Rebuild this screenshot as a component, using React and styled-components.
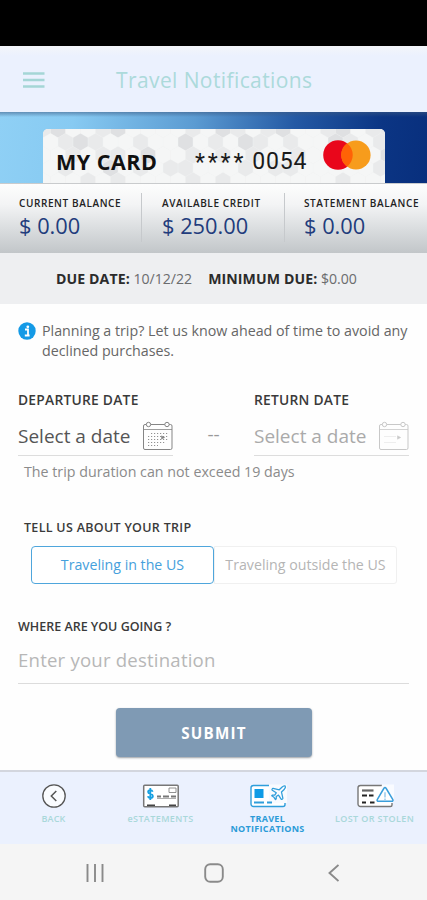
import React from 'react';
import styled, { createGlobalStyle } from 'styled-components';
import { Plane } from 'lucide-react';

const GlobalStyle = createGlobalStyle`
  * {
    box-sizing: border-box;
  }
  body {
    margin: 0;
    background: #fefefe;
    font-family: 'Open Sans', 'Liberation Sans', sans-serif;
  }
`;

const Screen = styled.div`
  width: 427px;
  height: 900px;
  display: flex;
  flex-direction: column;
  overflow: hidden;
  background: #fefefe;
`;

const StatusBar = styled.div`
  height: 46px;
  background: #000;
`;

const Header = styled.header`
  height: 66px;
  padding: 2px 23px 0;
  display: flex;
  align-items: center;
  background: linear-gradient(#f3f5f9, #ebf1fe 10px);
`;

const MenuIcon = styled.svg`
  width: 22px;
  height: 16px;
  stroke: #a5d6d6;
  stroke-width: 2.4;
`;

const Title = styled.h1`
  margin: 0 0 0 71px;
  font-size: 21px;
  font-weight: 400;
  letter-spacing: 0.4px;
  line-height: 28px;
  color: #acdadb;
  white-space: nowrap;
`;

const Hero = styled.section`
  height: 71px;
  padding: 17px 42px 0 43px;
  background:
    linear-gradient(rgba(60, 90, 130, 0.55), rgba(60, 90, 130, 0) 5px),
    linear-gradient(97deg, #8fd0f5 0%, #87caf2 17%, #5b9bd2 45%, #2459a4 68%, #0b3584 88%, #082f7d 100%);
`;

const CardFace = styled.div`
  display: grid;
  height: 54px;
  border-radius: 5px 5px 0 0;
  overflow: hidden;
  background: #f1f2f2;

  > * {
    grid-area: 1 / 1;
  }
`;

const CardRow = styled.div`
  z-index: 1;
  height: 54px;
  padding-left: 13px;
  display: flex;
  align-items: center;
`;

const CardName = styled.div`
  width: 139px;
  padding-top: 12px;
  font-size: 21.5px;
  font-weight: 700;
  letter-spacing: 0.5px;
  line-height: 30px;
  color: #111;
  white-space: nowrap;
`;

const CardNumber = styled.div`
  width: 128px;
  padding-top: 12px;
  display: flex;
  gap: 6px;
  font-family: Roboto, sans-serif;
  font-size: 23px;
  letter-spacing: 0.8px;
  line-height: 30px;
  color: #1b1b1b;
  white-space: nowrap;
`;

const Mask = styled.span`
  padding-top: 1px;
  letter-spacing: 2.9px;
`;

const LogoWrap = styled.div`
  height: 30px;
  margin-bottom: 3px;
  display: flex;
`;

const Balances = styled.section`
  height: 70px;
  padding: 9px 0 0;
  display: flex;
  border-top: 1px solid #c9cbcd;
  background: linear-gradient(#fdfdfd 0%, #f3f4f5 30%, #dadddf 65%, #c2c6c9 100%);
`;

const Balance = styled.div`
  width: ${(props) => props.$width}px;
  height: 49px;
  padding-left: ${(props) => props.$pad}px;
  border-left: ${(props) => (props.$divider ? '1px solid #c6c9cc' : 'none')};
  white-space: nowrap;
`;

const BalanceLabel = styled.div`
  padding-top: 2px;
  font-size: 10px;
  font-weight: 600;
  letter-spacing: 0.6px;
  line-height: 16px;
  color: #222;
`;

const BalanceValue = styled.div`
  font-size: 21.8px;
  line-height: 29px;
  color: #223c7c;
`;

const DueBar = styled.div`
  height: 51px;
  padding: 0 0 0 56px;
  display: flex;
  align-items: center;
  gap: 16px;
  font-size: 14.1px;
  color: #6b6c6e;
  background: #eeeff1;
  white-space: nowrap;

  b {
    font-weight: 700;
    letter-spacing: 0.1px;
    color: #2b2b2b;
  }
`;

const Form = styled.main`
  flex: 1;
  padding: 17px 18px 0;
`;

const Info = styled.div`
  display: flex;
  gap: 6px;
  height: 71px;
  font-size: 14.25px;
  line-height: 19.5px;
  color: #666;
  white-space: nowrap;

  svg {
    flex: none;
  }
`;

const Dates = styled.div`
  display: flex;
  justify-content: space-between;
`;

const DateField = styled.div`
  width: 155px;
`;

const Label = styled.div`
  height: 16px;
  padding-left: ${(props) => props.$indent || 0}px;
  font-size: ${(props) => props.$size}px;
  font-weight: 600;
  letter-spacing: ${(props) => props.$spacing || 0}px;
  line-height: 16px;
  color: #3a3a3a;
  white-space: nowrap;
`;

const DateInput = styled.div`
  height: 48px;
  padding-top: 8px;
  display: flex;
  justify-content: space-between;
  align-items: center;
  border-bottom: 1px solid #ddd;
  font-size: 19px;
  line-height: 24px;
  color: ${(props) => (props.$disabled ? '#aaa' : '#555')};
  white-space: nowrap;
`;

const Dash = styled.div`
  padding-top: 30px;
  font-size: 19px;
  line-height: 24px;
  color: #999;
`;

const Hint = styled.div`
  height: 64px;
  padding: 6px 0 0 6px;
  font-size: 14.25px;
  line-height: 20px;
  color: #8b8b8b;
`;

const Toggle = styled.div`
  height: 38px;
  margin: 10px 12px 35px 13px;
  display: flex;
`;

const ToggleOption = styled.button`
  width: 183px;
  padding: 0 0 1px;
  border: 1px solid ${(props) => (props.$active ? '#4fa6dc' : '#f0f0f0')};
  border-radius: ${(props) => (props.$active ? '4px' : '0 3px 3px 0')};
  background: #fff;
  font-family: inherit;
  font-size: 14.2px;
  color: ${(props) => (props.$active ? '#45a0dc' : '#b5b5b5')};
  white-space: nowrap;
`;

const Destination = styled.div`
  height: 49px;
  padding-top: 13px;
  border-bottom: 1px solid #dcdcdc;
  font-size: 18.6px;
  letter-spacing: 0.2px;
  line-height: 24px;
  color: #b7b7b7;
`;

const Submit = styled.button`
  display: block;
  width: 196px;
  height: 49px;
  margin: 24px 0 0 98px;
  border: 0;
  border-radius: 4px;
  background: #7f9ab4;
  box-shadow: 0 1px 2px rgba(60, 70, 80, 0.5);
  font-family: inherit;
  font-size: 15.2px;
  font-weight: 700;
  letter-spacing: 1.2px;
  color: #fff;
`;

const TabBar = styled.nav`
  height: 74px;
  padding-top: 11px;
  display: grid;
  grid-template-columns: repeat(4, 107px);
  border-top: 2px solid #d3d6de;
  background: #ebf1fe;
`;

const Tab = styled.div`
  display: flex;
  flex-direction: column;
  align-items: center;
  gap: 5px;
  font-size: 9px;
  font-weight: ${(props) => (props.$active ? 700 : 600)};
  letter-spacing: ${(props) => props.$spacing || 0}px;
  line-height: 10px;
  text-align: center;
  color: ${(props) => (props.$active ? '#2b9bd8' : '#a9d8da')};
  white-space: pre-line;
`;

const SystemBar = styled.div`
  height: 56px;
  padding: 1px 0 0 86px;
  display: flex;
  align-items: center;
  gap: 100px;
  background: #f5f5f5;
`;

// tone of each hexagon in the card background, row by row
const hexTones = [
  '120012000010210120012011002100120',
  '012100100201021010021010210100210',
  '001011020010101001000102001010010',
  '010020101100010110000010100201001',
  '000101000010100000001000010000100'
];
const toneFill = ['#f5f6f6', '#e9eaeb', '#dfe0e2'];

const HexPattern = () => (
  <svg width="342" height="54" viewBox="0 0 342 54">
    {hexTones.map((row, r) =>
      row.split('').map((tone, c) => {
        const x = c * 15 + (r % 2 ? 7.5 : 0);
        const y = r * 13;
        return (
          <polygon
            key={`${r}-${c}`}
            points={`${x},${y - 8.5} ${x + 7.3},${y - 4.3} ${x + 7.3},${y + 4.3} ${x},${y + 8.5} ${x - 7.3},${y + 4.3} ${x - 7.3},${y - 4.3}`}
            fill={toneFill[tone]}
          />
        );
      })
    )}
  </svg>
);

const CardLogo = () => (
  <svg width="48" height="30" viewBox="0 0 48 30">
    <circle cx="15" cy="15" r="14.8" fill="#e9061b" />
    <circle cx="33" cy="15" r="14.6" fill="#f79c1c" />
    <path d="M24 3.200a15 15 0 0 1 0 23.600a14.700 14.700 0 0 1 0-23.600z" fill="#ff6206" />
  </svg>
);

const CalendarIcon = ({ disabled }) => {
  const color = disabled ? '#c8c8c8' : '#858585';
  return (
    <svg width="31" height="30" viewBox="0 0 31 30" fill="none" stroke={color}>
      <rect x="1.5" y="3.5" width="28.5" height="25" rx="1.5" />
      <path d="M2 8.5h28" strokeWidth="0.8" />
      <circle cx="6.5" cy="3.5" r="2.2" fill="#fefefe" />
      <circle cx="25" cy="3.5" r="2.2" fill="#fefefe" />
      {disabled ? (
        <path d="M6 15.5h12M6 21.5h12" strokeWidth="0.3" />
      ) : (
        <path
          d="M9 12.5h17M6 15.5h20M6 18.5h20M6 21.5h17M6 24.5h10"
          strokeDasharray="1.2 1.8"
          strokeWidth="0.9"
        />
      )}
      <path d="M19.500 14.800v3.400l3.200-1.700z" fill={color} strokeWidth="0.5" />
    </svg>
  );
};

const BackIcon = () => (
  <svg width="26" height="26" viewBox="0 0 26 26" fill="none" stroke="#555">
    <circle cx="13" cy="13" r="11.2" fill="#fafcff" strokeWidth="1.3" />
    <path d="M15.3 8l-5 5 5 5" strokeWidth="1.5" />
  </svg>
);

const StatementIcon = () => (
  <svg width="38" height="26" viewBox="0 0 38 26" fill="none" stroke="#777">
    <rect x="1.7" y="2.2" width="34.5" height="21.6" rx="1" fill="#fff" strokeWidth="1.5" />
    <path
      d="M10.700 8.700c-.4-1.100-1.200-1.500-2.400-1.500-1.300 0-2.200.6-2.200 1.800 0 2.500 4.800 1.300 4.800 4 0 1.400-1.200 2-2.500 2-1.300 0-2.300-.6-2.600-1.800M8.300 5v12"
      stroke="#16a0e2"
      strokeWidth="1.8"
    />
    <path d="M27 5h7v4.500h-7z" strokeWidth="0.8" />
    <path d="M15 13.500h4m2 0h6m2 0h5" stroke="#777" strokeWidth="2" />
    <path d="M15 15.500h19" strokeWidth="0.6" />
    <path d="M5 22.300h8m14 0h7" stroke="#444" strokeWidth="1.600" />
  </svg>
);

const TravelIcon = () => (
  <svg width="38" height="26" viewBox="0 0 38 26" fill="none" stroke="#2f9edb">
    <path
      d="M20 2.500H4.500a2.500 2.500 0 0 0-2.500 2.500v16a2.500 2.500 0 0 0 2.500 2.500H34a2 2 0 0 0 2-2V20"
      fill="#fff"
      strokeWidth="1.4"
    />
    <path d="M20 1.500H38V20H20z" fill="#f9fbff" stroke="none" />
    <rect x="5.500" y="6" width="9" height="9" fill="#0f9be6" stroke="none" />
    <path d="M5 19.500h10m3 0h5" strokeWidth="1.8" />
    <Plane x="20.5" y="0.8" size={18} strokeWidth={1.7} color="#2f9edb" />
  </svg>
);

const LostIcon = () => (
  <svg width="38" height="26" viewBox="0 0 38 26" fill="none" stroke="#777">
    <path
      d="M26 2.500H4.500a2.500 2.500 0 0 0-2.500 2.500v16a2.500 2.500 0 0 0 2.500 2.500H34.500q1.500 0 1.500-1.500V20"
      fill="#fff"
      strokeWidth="1.4"
    />
    <path d="M26 1.500h12v18H22z" fill="#f9fbff" stroke="none" />
    <path d="M6 7.500h11.500" stroke="#666" strokeWidth="2.200" />
    <path d="M6 12.500h5m2 0h4.500M6 19.500h4m4 0h4.500" stroke="#222" strokeWidth="2" />
    <path
      d="M27.800 5.500q1.200-2 2.400 0l6.500 10.800q1 2-1.200 2H22.700q-2.300 0-1.300-2z"
      fill="#fff"
      stroke="#3a9edb"
      strokeWidth="1.500"
    />
    <path d="M29 9.200v5.200m0 1.200v1.400" stroke="#7fbde6" strokeWidth="1.200" />
  </svg>
);

const balances = [
  { label: 'CURRENT BALANCE', value: '$ 0.00', width: 141, pad: 19 },
  { label: 'AVAILABLE CREDIT', value: '$ 250.00', width: 143, pad: 20, divider: true },
  { label: 'STATEMENT BALANCE', value: '$ 0.00', width: 143, pad: 19, divider: true }
];

const App = () => {
  return (
    <>
      <GlobalStyle />
      <Screen>
        <StatusBar />
        <Header>
          <MenuIcon viewBox="0 0 22 16">
            <path d="M0 1.500h21.500M0 8h21.500M0 14.500h21.500" />
          </MenuIcon>
          <Title>Travel Notifications</Title>
        </Header>

        <Hero>
          <CardFace>
            <HexPattern />
            <CardRow>
              <CardName>MY CARD</CardName>
              <CardNumber>
                <Mask>****</Mask>
                <span>0054</span>
              </CardNumber>
              <LogoWrap>
                <CardLogo />
              </LogoWrap>
            </CardRow>
          </CardFace>
        </Hero>

        <Balances>
          {balances.map((item) => (
            <Balance key={item.label} $width={item.width} $pad={item.pad} $divider={item.divider}>
              <BalanceLabel>{item.label}</BalanceLabel>
              <BalanceValue>{item.value}</BalanceValue>
            </Balance>
          ))}
        </Balances>

        <DueBar>
          <span><b>DUE DATE:</b> 10/12/22</span>
          <span><b>MINIMUM DUE:</b> $0.00</span>
        </DueBar>

        <Form>
          <Info>
            <svg width="18" height="20" viewBox="0 0 18 20">
              <circle cx="9" cy="10" r="8.7" fill="#149ae6" />
              <circle cx="9.800" cy="5.800" r="1.400" fill="#fff" />
              <path d="M7 8.500h3v6M6.800 14.500h4.800" stroke="#fff" strokeWidth="1.800" fill="none" />
            </svg>
            <div>
              Planning a trip? Let us know ahead of time to avoid any
              <br />
              declined purchases.
            </div>
          </Info>

          <Dates>
            <DateField>
              <Label $size={13.8} $spacing={0.25}>DEPARTURE DATE</Label>
              <DateInput>
                Select a date
                <CalendarIcon />
              </DateInput>
            </DateField>
            <Dash>--</Dash>
            <DateField>
              <Label $size={13.8} $spacing={0.25}>RETURN DATE</Label>
              <DateInput $disabled>
                Select a date
                <CalendarIcon disabled />
              </DateInput>
            </DateField>
          </Dates>
          <Hint>The trip duration can not exceed 19 days</Hint>

          <Label $size={12.5} $indent={6} $spacing={0.3}>TELL US ABOUT YOUR TRIP</Label>
          <Toggle>
            <ToggleOption $active>Traveling in the US</ToggleOption>
            <ToggleOption>Traveling outside the US</ToggleOption>
          </Toggle>

          <Label $size={12.5}>WHERE ARE YOU GOING ?</Label>
          <Destination>Enter your destination</Destination>
          <Submit>SUBMIT</Submit>
        </Form>

        <TabBar>
          <Tab $spacing={0.2}>
            <BackIcon />
            BACK
          </Tab>
          <Tab $spacing={0.4}>
            <StatementIcon />
            eSTATEMENTS
          </Tab>
          <Tab $active $spacing={0.3}>
            <TravelIcon />
            {'TRAVEL\nNOTIFICATIONS'}
          </Tab>
          <Tab $spacing={0.4}>
            <LostIcon />
            LOST OR STOLEN
          </Tab>
        </TabBar>

        <SystemBar>
          <svg width="18" height="18" viewBox="0 0 18 18" stroke="#8a8a8a" strokeWidth="1.900">
            <path d="M1.500 0v18M9 0v18M16.500 0v18" />
          </svg>
          <svg width="20" height="20" viewBox="0 0 20 20" fill="none" stroke="#8a8a8a" strokeWidth="1.900">
            <rect x="1.200" y="1.200" width="17.600" height="17.600" rx="5" />
          </svg>
          <svg width="15" height="18" viewBox="0 0 15 18" fill="none" stroke="#8a8a8a" strokeWidth="1.900">
            <path d="M14.500 1l-9 8 9 8" />
          </svg>
        </SystemBar>
      </Screen>
    </>
  );
};

export default App;
